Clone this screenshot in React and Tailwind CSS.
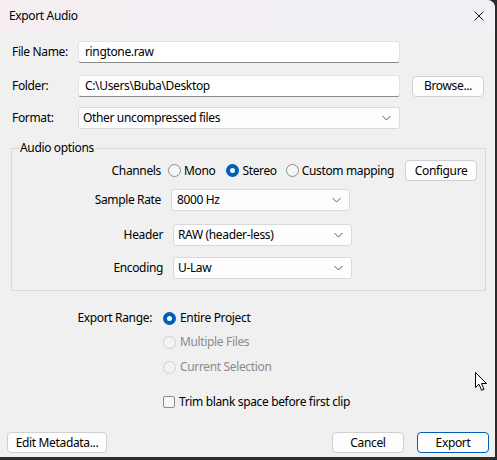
import React from "react";

function Radio({ checked, disabled }) {
  if (checked) {
    return (
      <span className="w-[13px] h-[13px] rounded-full bg-[#005fb8] flex items-center justify-center shrink-0">
        <span className="w-[5px] h-[5px] rounded-full bg-white" />
      </span>
    );
  }
  return (
    <span
      className={
        disabled
          ? "block w-[13px] h-[13px] rounded-full border border-[#cfcfcf] bg-[#f3f3f3] shrink-0"
          : "block w-[13px] h-[13px] rounded-full border border-[#8b8b8b] bg-[#f6f6f6] shrink-0"
      }
    />
  );
}

function Chevron() {
  return (
    <svg width="9" height="6" viewBox="0 0 9 6" className="shrink-0">
      <path d="M0.5 1 L4.5 5 L8.5 1" fill="none" stroke="#5c5c5c" strokeWidth="1" />
    </svg>
  );
}

function Select({ value, w, pl = "pl-[5px]" }) {
  return (
    <div
      className={`${w} h-[22px] bg-[#fdfdfd] border border-[#d9d9d9] rounded-[3px] flex items-center justify-between ${pl} pr-[8px]`}
    >
      <span>{value}</span>
      <Chevron />
    </div>
  );
}

function Button({ children, w, primary }) {
  return (
    <div
      className={
        primary
          ? `${w} h-[21px] bg-[#fdfdfd] border border-[#005fb8] rounded-[4px] flex items-center justify-center`
          : `${w} h-[21px] bg-[#fdfdfd] border border-[#d0d0d0] rounded-[4px] flex items-center justify-center`
      }
    >
      {children}
    </div>
  );
}

export default function App() {
  return (
    <div className="w-[497px] h-[460px] bg-[#2c2c2c] overflow-hidden font-['Noto_Sans',sans-serif] text-[12px] leading-[16px] tracking-[-0.35px] text-black">
      <div className="w-[495px] h-[457px] bg-[#f0f0f0] rounded-tr-[8px] flex flex-col relative">
        {/* Title bar */}
        <div className="h-[31px] shrink-0 bg-gradient-to-r from-[#f5eef3] to-[#f1f0f6] rounded-tr-[8px] flex items-center justify-between pl-[9px] pr-[11px]">
          <span>Export Audio</span>
          <svg width="10" height="10" viewBox="0 0 10 10">
            <path d="M0.5 0.5 L9.5 9.5 M9.5 0.5 L0.5 9.5" stroke="#1a1a1a" strokeWidth="1" />
          </svg>
        </div>

        {/* Top fields */}
        <div className="flex flex-col pl-[12px] pt-[10px]">
          <div className="flex items-center h-[22px]">
            <span className="w-[66px]">File Name:</span>
            <div className="w-[322px] h-[22px] bg-white border border-[#e3e3e3] border-b-[#8a8a8a] rounded-[3px] flex items-center pl-[6px]">
              ringtone.raw
            </div>
          </div>
          <div className="flex items-center h-[22px] mt-[12px]">
            <span className="w-[66px]">Folder:</span>
            <div className="w-[322px] h-[22px] bg-white border border-[#e3e3e3] border-b-[#8a8a8a] rounded-[3px] flex items-center pl-[6px]">
              C:\Users\Buba\Desktop
            </div>
            <div className="ml-[12px]">
              <Button w="w-[72px]">Browse...</Button>
            </div>
          </div>
          <div className="flex items-center h-[22px] mt-[10px]">
            <span className="w-[66px]">Format:</span>
            <Select value="Other uncompressed files" w="w-[322px]" pl="pl-[4px]" />
          </div>
        </div>

        {/* Audio options group */}
        <fieldset className="ml-[11px] mt-[11px] w-[475px] border border-[#dadada] pb-[11px]">
          <legend className="ml-[7px] px-[1px]">Audio options</legend>
          <div className="flex flex-col mt-[5px]">
            <div className="flex items-center h-[19px]">
              <span className="w-[149px] text-right">Channels</span>
              <div className="flex items-center ml-[7px]">
                <Radio />
                <span className="ml-[3px]">Mono</span>
                <span className="ml-[11px] flex"><Radio checked /></span>
                <span className="ml-[3px]">Stereo</span>
                <span className="ml-[9px] flex"><Radio /></span>
                <span className="ml-[3px]">Custom mapping</span>
              </div>
              <div className="ml-[11px]">
                <Button w="w-[72px]">Configure</Button>
              </div>
            </div>
            <div className="flex items-center h-[22px] mt-[9px]">
              <span className="w-[149px] text-right">Sample Rate</span>
              <div className="ml-[10px]">
                <Select value="8000 Hz" w="w-[179px]" />
              </div>
            </div>
            <div className="flex items-center h-[22px] mt-[13px]">
              <span className="w-[151px] text-right">Header</span>
              <div className="ml-[10px]">
                <Select value="RAW (header-less)" w="w-[179px]" pl="pl-[4px]" />
              </div>
            </div>
            <div className="flex items-center h-[22px] mt-[11px]">
              <span className="w-[151px] text-right">Encoding</span>
              <div className="ml-[10px]">
                <Select value="U-Law" w="w-[179px]" pl="pl-[4px]" />
              </div>
            </div>
          </div>
        </fieldset>

        {/* Export range */}
        <div className="flex mt-[17px]">
          <div className="w-[152px] h-[20px] flex items-center justify-end">Export Range:</div>
          <div className="flex flex-col ml-[11px]">
            <div className="flex items-center h-[20px]">
              <Radio checked />
              <span className="ml-[4px]">Entire Project</span>
            </div>
            <div className="flex items-center h-[20px] mt-[4px] text-[#8c8c8c]">
              <Radio disabled />
              <span className="ml-[4px]">Multiple Files</span>
            </div>
            <div className="flex items-center h-[20px] mt-[5px] text-[#8c8c8c]">
              <Radio disabled />
              <span className="ml-[4px]">Current Selection</span>
            </div>
            <div className="flex items-center h-[20px] mt-[15px]">
              <span className="block w-[12px] h-[12px] border border-[#8b8b8b] rounded-[2px] bg-[#f6f6f6] shrink-0" />
              <span className="ml-[4px]">Trim blank space before first clip</span>
            </div>
          </div>
        </div>

        {/* Bottom buttons */}
        <div className="mt-auto mb-[4px] flex items-center pl-[7px] pr-[6px]">
          <Button w="w-[100px]">Edit Metadata...</Button>
          <div className="ml-auto">
            <Button w="w-[72px]">Cancel</Button>
          </div>
          <div className="ml-[13px]">
            <Button w="w-[72px]" primary>Export</Button>
          </div>
        </div>

        {/* Mouse cursor */}
        <svg className="absolute left-[475px] top-[372px]" width="13" height="20" viewBox="0 0 13 20">
          <path d="M0.5 0.5 L0.5 15.5 L4 12.2 L6.6 18.3 L9 17.3 L6.5 11.5 L11.5 11.5 Z" fill="white" stroke="black" strokeWidth="1" strokeLinejoin="miter" />
        </svg>
      </div>
    </div>
  );
}
